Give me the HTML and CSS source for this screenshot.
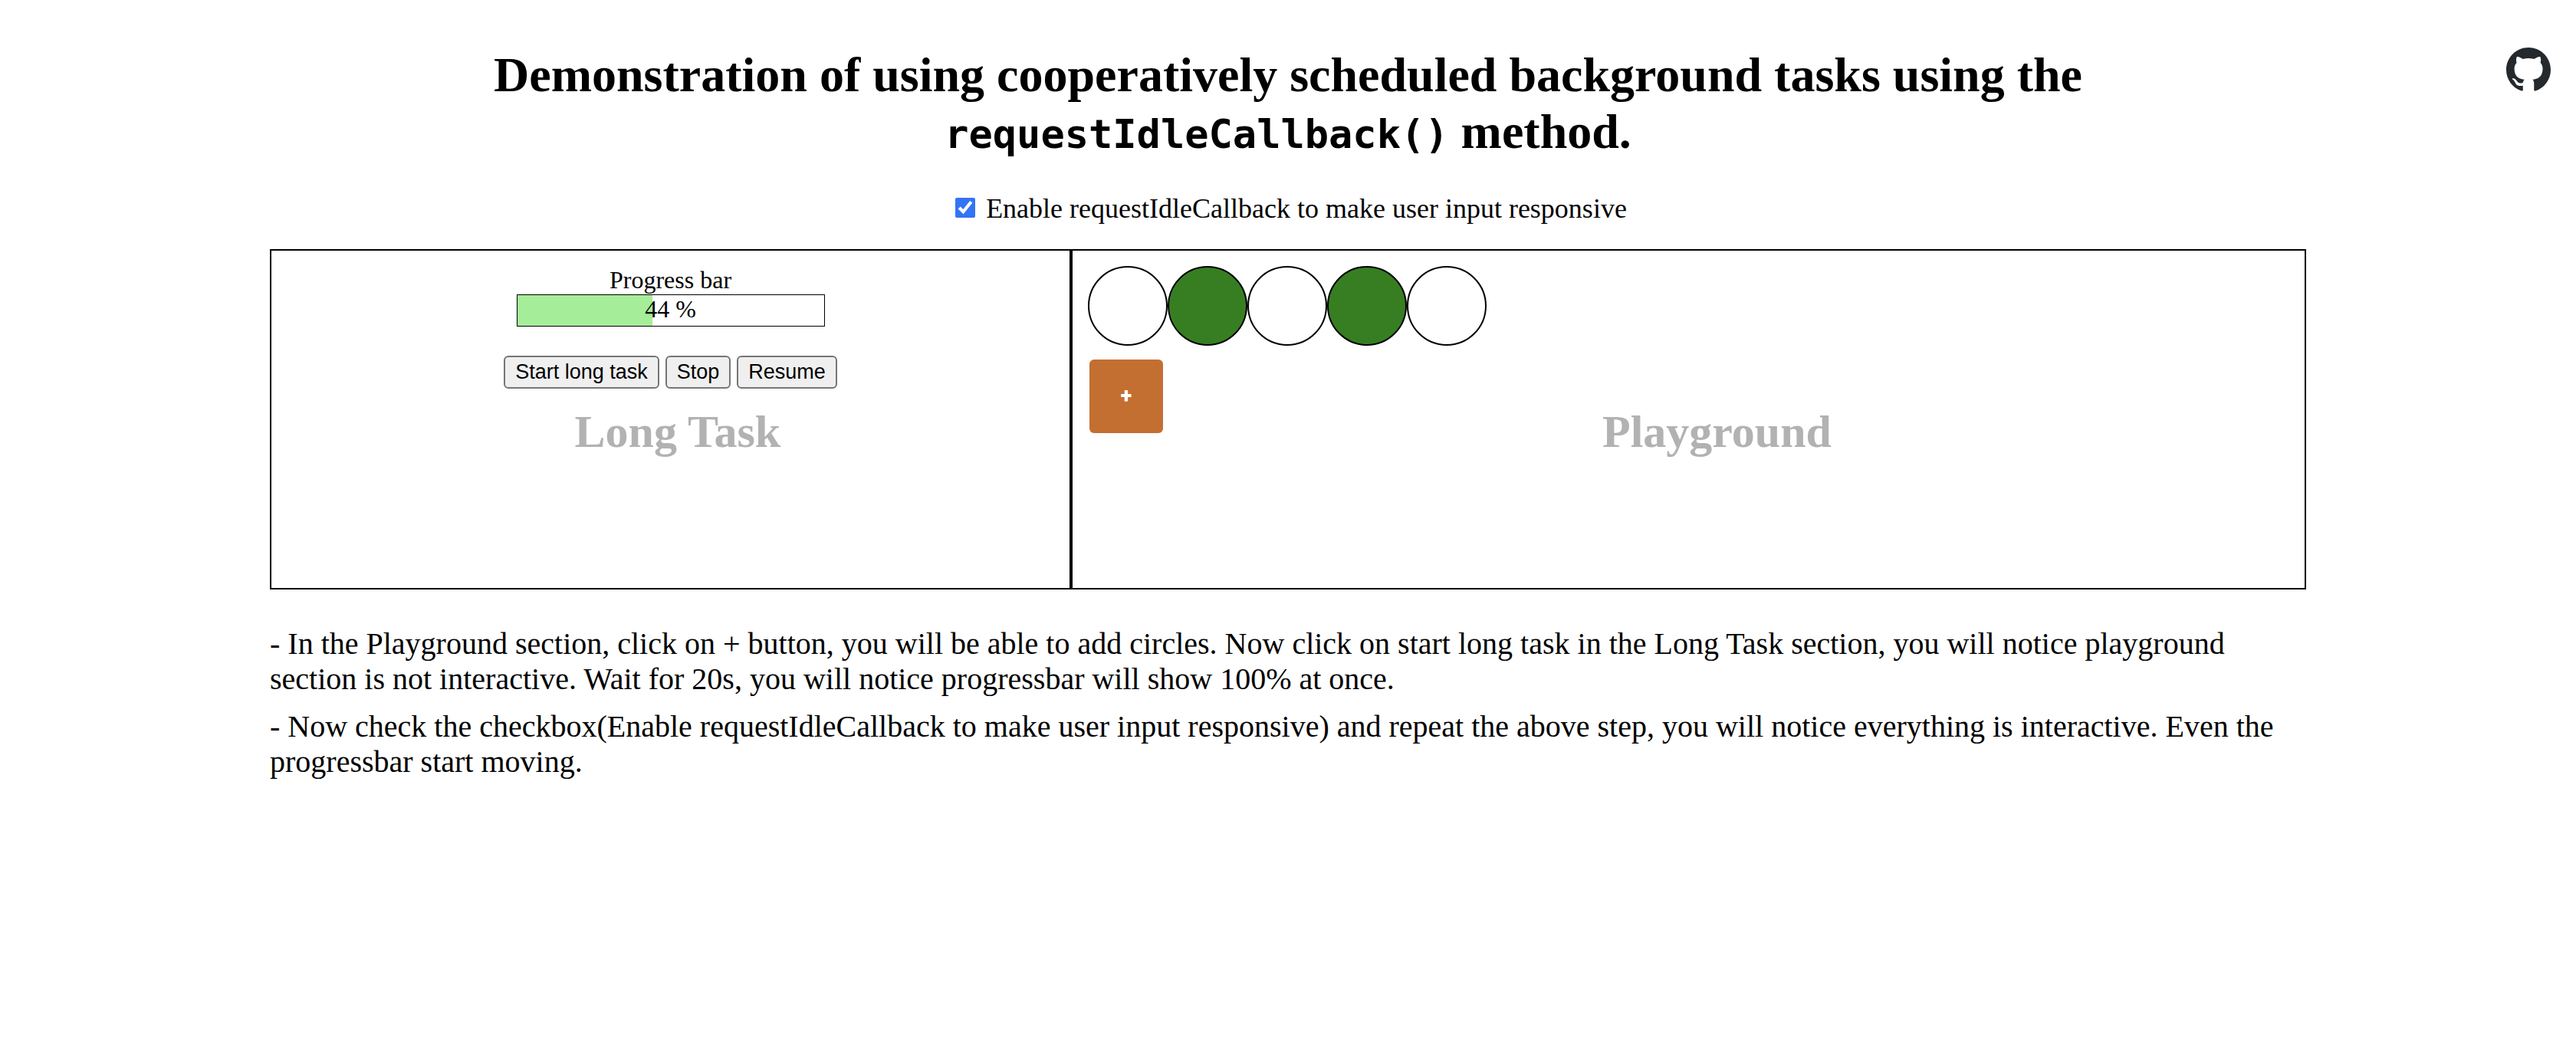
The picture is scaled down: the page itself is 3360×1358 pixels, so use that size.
FILE: index.html
```
<!DOCTYPE html>
<html lang="en">
<head>
  <meta charset="utf-8">
  <title>requestIdleCallback demo</title>
  <link rel="stylesheet" href="styles.css">
</head>
<body>
  <a class="github" href="https://github.com" aria-label="GitHub">
    <svg viewBox="0 0 16 16" aria-hidden="true"><path fill-rule="evenodd" d="M8 0C3.58 0 0 3.58 0 8c0 3.54 2.29 6.53 5.47 7.59.4.07.55-.17.55-.38 0-.19-.01-.82-.01-1.49-2.01.37-2.53-.49-2.69-.94-.09-.23-.48-.94-.82-1.13-.28-.15-.68-.52-.01-.53.63-.01 1.08.58 1.23.82.72 1.21 1.87.87 2.33.66.07-.52.28-.87.51-1.07-1.78-.2-3.64-.89-3.64-3.95 0-.87.31-1.59.82-2.15-.08-.2-.36-1.02.08-2.12 0 0 .67-.21 2.2.82.64-.18 1.32-.27 2-.27s1.36.09 2 .27c1.53-1.04 2.2-.82 2.2-.82.44 1.1.16 1.92.08 2.12.51.56.82 1.27.82 2.15 0 3.07-1.87 3.75-3.65 3.95.29.25.54.73.54 1.48 0 1.07-.01 1.93-.01 2.2 0 .21.15.46.55.38A8.01 8.01 0 0 0 16 8c0-4.42-3.58-8-8-8z"/></svg>
  </a>

  <main class="page">
    <h1 class="title">Demonstration of using cooperatively scheduled background tasks using the <code>requestIdleCallback()</code> method.</h1>

    <div class="option">
      <input class="option-box" type="checkbox" id="enable-idle" checked>
      <label for="enable-idle">Enable requestIdleCallback to make user input responsive</label>
    </div>

    <div class="panels">
      <section class="panel long-task">
        <h2 class="watermark">Long Task</h2>
        <div id="progress-label">Progress bar</div>
        <div class="progress" role="progressbar" aria-labelledby="progress-label" aria-valuemin="0" aria-valuemax="100" aria-valuenow="44">
          <div class="progress-fill" style="width: 44%"></div>
          <span class="progress-text">44 %</span>
        </div>
        <div class="actions">
          <button class="action" type="button">Start long task</button>
          <button class="action" type="button">Stop</button>
          <button class="action" type="button">Resume</button>
        </div>
      </section>

      <section class="panel playground">
        <h2 class="watermark">Playground</h2>
        <div class="circles">
          <div class="circle"></div>
          <div class="circle filled"></div>
          <div class="circle"></div>
          <div class="circle filled"></div>
          <div class="circle"></div>
        </div>
        <button class="add" type="button">+</button>
      </section>
    </div>

    <div class="notes">
      <p>- In the Playground section, click on + button, you will be able to add circles. Now click on start long task in the Long Task section, you will notice playground section is not interactive. Wait for 20s, you will notice progressbar will show 100% at once.</p>
      <p>- Now check the checkbox(Enable requestIdleCallback to make user input responsive) and repeat the above step, you will notice everything is interactive. Even the progressbar start moving.</p>
    </div>
  </main>
</body>
</html>
```
FILE: styles.css
```
* {
  box-sizing: border-box;
}

body {
  margin: 0;
  padding: 61px calc(10% + 16px);
  background: #fff;
  color: #000;
  font-family: "Liberation Serif", "Times New Roman", serif;
  font-size: 32px;
}

.github {
  position: absolute;
  top: 62px;
  right: 33px;
  color: #24292e;
}

.github svg {
  display: block;
  width: 58px;
  height: 58px;
  fill: currentColor;
}

.title {
  margin: 0 0 43px;
  font-size: 64px;
  line-height: 74px;
  text-align: center;
}

.title code {
  font-family: "DejaVu Sans Mono", monospace;
  font-size: 52px;
  line-height: 1;
}

.option {
  display: flex;
  justify-content: center;
  align-items: center;
  gap: 14px;
  margin-bottom: 32px;
  font-size: 36px;
  line-height: 41px;
}

.option-box {
  width: 26px;
  height: 26px;
  margin: 0 0 4px 8px;
  accent-color: #3374f5;
}

.panels {
  display: grid;
  grid-template-columns: 1045fr 1611fr;
  min-height: 444px;
}

.panel {
  position: relative;
  padding: 20px;
  border: 2px solid #000;
}

.watermark {
  position: absolute;
  top: 46%;
  margin: 0;
  color: #b2b2b2;
  font-size: 60px;
  line-height: 69px;
}

.long-task {
  display: flex;
  flex-direction: column;
  align-items: center;
  line-height: 37px;
}

.long-task .watermark {
  left: 38%;
}

.playground .watermark {
  left: 43%;
}

.progress {
  display: grid;
  width: 402px;
  height: 42px;
  border: 1px solid #000;
}

.progress-fill,
.progress-text {
  grid-area: 1 / 1;
}

.progress-fill {
  background: #a6ed99;
}

.progress-text {
  text-align: center;
}

.actions {
  display: flex;
  gap: 8px;
  margin-top: 38px;
}

.action {
  padding: 4px 13px;
  border: 2px solid #767676;
  border-radius: 6px;
  background: #efefef;
  color: #000;
  font-family: "Liberation Sans", Arial, sans-serif;
  font-size: 27px;
  line-height: 31px;
}

.circles {
  display: flex;
}

.circle {
  width: 104px;
  height: 104px;
  border: 2px solid #000;
  border-radius: 50%;
}

.circle.filled {
  background: #377e22;
}

.add {
  width: 96px;
  height: 96px;
  margin: 18px 2px;
  padding: 0 0 2px;
  border: 0;
  border-radius: 6px;
  background: #c46f32;
  color: #fff;
  font-family: Roboto, "Liberation Sans", sans-serif;
  font-size: 27px;
  font-weight: 900;
}

.notes {
  display: grid;
  gap: 16px;
  margin-top: 48px;
  font-size: 40px;
  line-height: 46px;
}

.notes p {
  margin: 0;
}
```
